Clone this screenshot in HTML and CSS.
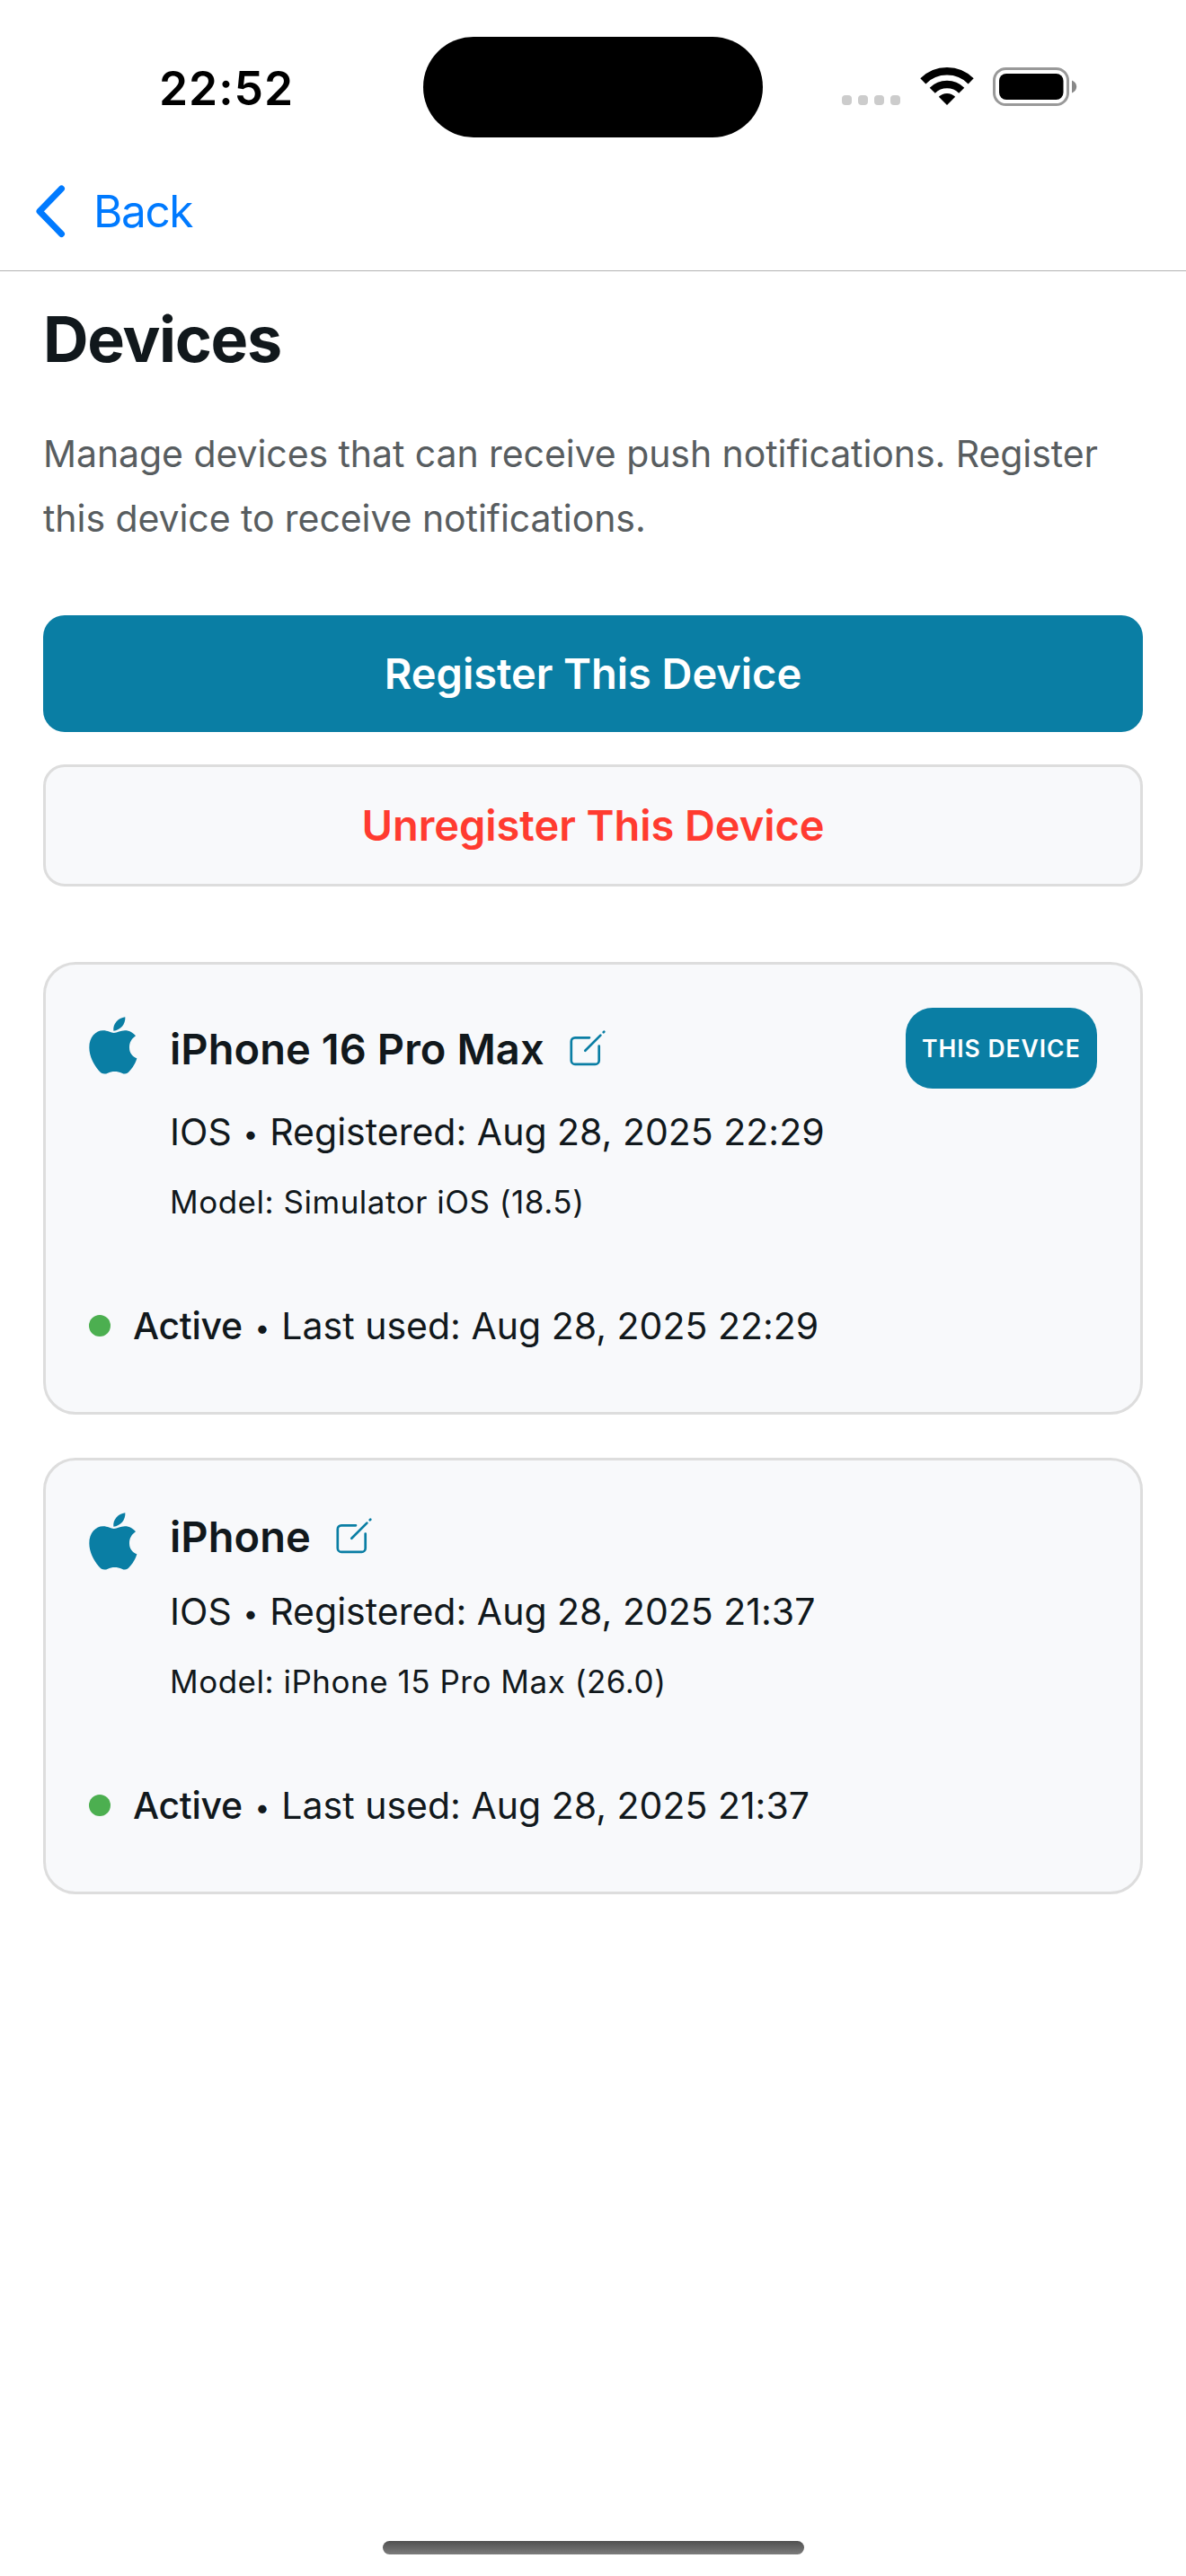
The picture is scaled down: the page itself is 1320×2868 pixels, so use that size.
FILE: index.html
```html
<!DOCTYPE html>
<html lang="en">
<head>
<meta charset="utf-8">
<title>Devices</title>
<link rel="stylesheet" href="styles.css">
</head>
<body>
<svg class="sprite" aria-hidden="true">
  <symbol id="apple" viewBox="27 36 162 198">
    <path d="M110 90C122 90 132 82 147 82C163 82 175 90 183 100C170 109 162 121 162 139C162 157 172 169 187 175C183 191 172 208 163 217C155 227 147 229 137 224C122 217 103 217 90 224C78 230 68 226 60 216C42 195 28 168 28 139C28 104 50 82 74 82C90 82 100 90 110 90Z"/>
    <path d="M109 83C106 60 124 40 148 37C150 60 132 82 109 83Z"/>
  </symbol>
  <symbol id="edit" viewBox="0 0 44 44">
    <path d="M24 9.3H8A4.2 4.2 0 0 0 3.8 13.5V34.7A4.2 4.2 0 0 0 8 38.9H30.5A4.2 4.2 0 0 0 34.7 34.7V18.5M19.3 23.7L36.4 6.6M39.7 3.3L40.3 2.7"/>
  </symbol>
</svg>
<div class="screen">
  <div class="status-bar">
    <div class="time">22:52</div>
    <div class="island"></div>
    <div class="indicators">
      <div class="cellular"><i></i><i></i><i></i><i></i></div>
      <svg class="wifi" viewBox="0 0 60 44">
        <path class="arc" d="M3.34 16.34A37.7 37.7 0 0 1 56.66 16.34M13.74 26.74A23 23 0 0 1 46.26 26.74"/>
        <path d="M30 43L20.8 33.8A13 13 0 0 1 39.2 33.8Z"/>
      </svg>
      <svg class="battery" viewBox="0 0 94 44">
        <rect class="shell" x="1.5" y="2.5" width="82" height="40" rx="13"/>
        <rect x="7" y="8" width="71.5" height="29" rx="8"/>
        <path class="nub" d="M88 15.5C91.2 16.6 93.2 19.5 93.2 22.5S91.2 28.4 88 29.5Z"/>
      </svg>
    </div>
  </div>

  <nav class="nav">
    <svg class="chevron" viewBox="0 0 36 60"><path d="M30.5 5L6 30.2L30.5 55.5"/></svg>
    <a class="back">Back</a>
  </nav>

  <main class="content">
    <h1 class="title">Devices</h1>
    <p class="description">Manage devices that can receive push notifications. Register<br>this device to receive notifications.</p>
    <button class="button primary">Register This Device</button>
    <button class="button danger">Unregister This Device</button>

    <div class="devices">
      <section class="card">
        <div class="device">
          <svg class="platform"><use href="#apple"/></svg>
          <div class="info">
            <div class="heading current">
              <h2 class="name">iPhone 16 Pro Max</h2>
              <svg class="edit"><use href="#edit"/></svg>
              <span class="badge">THIS DEVICE</span>
            </div>
            <p class="meta">IOS <span class="sep">•</span> Registered: Aug 28, 2025 22:29</p>
            <p class="model">Model: Simulator iOS (18.5)</p>
          </div>
        </div>
        <div class="status"><i class="dot"></i><strong class="state">Active</strong><span class="used"><span class="sep">•</span> Last used: Aug 28, 2025 22:29</span></div>
      </section>

      <section class="card">
        <div class="device">
          <svg class="platform"><use href="#apple"/></svg>
          <div class="info">
            <div class="heading">
              <h2 class="name">iPhone</h2>
              <svg class="edit"><use href="#edit"/></svg>
            </div>
            <p class="meta">IOS <span class="sep">•</span> Registered: Aug 28, 2025 21:37</p>
            <p class="model">Model: iPhone 15 Pro Max (26.0)</p>
          </div>
        </div>
        <div class="status"><i class="dot"></i><strong class="state">Active</strong><span class="used"><span class="sep">•</span> Last used: Aug 28, 2025 21:37</span></div>
      </section>
    </div>
  </main>

  <div class="home-indicator"></div>
</div>
</body>
</html>
```
FILE: styles.css
```css
* { box-sizing: border-box; margin: 0; padding: 0; }

body {
  background: #fff;
  color: #11181c;
  font-family: Inter, "Liberation Sans", sans-serif;
}

.sprite { display: none; }

.screen {
  display: flex;
  flex-direction: column;
  width: 1320px;
  height: 2868px;
  padding-bottom: 24px;
}

/* Status bar */
.status-bar {
  display: grid;
  grid-template-columns: 471px 378px 1fr;
  align-items: start;
  height: 170px;
}
.time {
  margin-top: 68px;
  padding-left: 177px;
  color: #000;
  font-size: 51.5px;
  font-weight: 600;
  line-height: 60px;
  letter-spacing: 1px;
}
.island {
  height: 112px;
  margin-top: 41px;
  border-radius: 56px;
  background: #000;
}
.indicators {
  display: flex;
  height: 44px;
  margin-top: 74px;
  padding-left: 88px;
}
.cellular {
  display: flex;
  gap: 7px;
  margin-top: 32px;
}
.cellular i {
  width: 11px;
  height: 11px;
  border-radius: 4px;
  background: #ccc;
}
.wifi { width: 60px; height: 44px; margin-left: 21.5px; }
.wifi .arc { fill: none; stroke: #000; stroke-width: 8.6; }
.battery { width: 94px; height: 44px; margin-left: 21.5px; }
.battery .shell { fill: none; stroke: #999; stroke-width: 3; }
.battery .nub { fill: #888; }

/* Navigation */
.nav {
  display: flex;
  align-items: center;
  height: 132px;
  padding: 0 0 2px 38px;
  border-bottom: 1px solid #b2b2b2;
}
.chevron { width: 36px; height: 60px; }
.chevron path {
  fill: none;
  stroke: #007aff;
  stroke-width: 7;
  stroke-linecap: round;
  stroke-linejoin: round;
}
.back {
  margin-left: 30px;
  color: #007aff;
  font-size: 49.5px;
  line-height: 60px;
  letter-spacing: -1.4px;
}

/* Content */
.content {
  display: flex;
  flex-direction: column;
  padding: 34px 48px 0;
}
.title {
  font-size: 70px;
  font-weight: 700;
  line-height: 84px;
  letter-spacing: -1.3px;
}
.description {
  margin-top: 49px;
  color: #585d60;
  font-size: 41px;
  line-height: 72px;
  letter-spacing: -0.07px;
}
.button {
  height: 130px;
  margin-top: 72px;
  padding-bottom: 2px;
  border: 0;
  border-radius: 24px;
  font-family: inherit;
  font-size: 47px;
  font-weight: 600;
  letter-spacing: -0.06px;
}
.primary { background: #0a7ea4; color: #fff; }
.danger {
  height: 136px;
  margin-top: 36px;
  border: 3px solid #ddd;
  background: #f8f9fb;
  color: #ff3b30;
}

/* Device cards */
.devices {
  display: flex;
  flex-direction: column;
  gap: 48px;
  margin-top: 84px;
}
.card {
  padding: 48px 48px 66px;
  border: 3px solid #ddd;
  border-radius: 36px;
  background: #f8f9fb;
}
.device { display: flex; gap: 36px; }
.platform {
  width: 54px;
  height: 66px;
  margin-top: 10px;
  fill: #0a7ea4;
}
.info { flex: 1; }
.heading { display: flex; align-items: center; height: 72px; }
.current { height: 90px; }
.name {
  padding-top: 2px;
  font-size: 47px;
  font-weight: 600;
  line-height: 60px;
  letter-spacing: 0.06px;
}
.edit {
  width: 44px;
  height: 44px;
  margin: 2px 0 0 26.5px;
  fill: none;
  stroke: #0a7ea4;
  stroke-width: 2.7;
  stroke-linecap: round;
}
.badge {
  width: 213px;
  height: 90px;
  margin-left: auto;
  padding-left: 18px;
  border-radius: 30px;
  background: #0a7ea4;
  color: #fff;
  font-size: 26.5px;
  font-weight: 600;
  line-height: 91px;
  letter-spacing: 0.98px;
}
.meta {
  margin-top: 18px;
  font-size: 41px;
  line-height: 60px;
  letter-spacing: 0.01px;
}
.sep {
  display: inline-flex;
  justify-content: center;
  width: 19.5px;
  font-size: 30px;
  line-height: 1;
  vertical-align: 2px;
}
.model {
  margin-top: 24px;
  font-size: 35px;
  line-height: 48px;
  letter-spacing: 0.52px;
}
.status {
  display: flex;
  align-items: center;
  height: 60px;
  margin-top: 84px;
  font-size: 41px;
  line-height: 60px;
}
.dot {
  width: 24px;
  height: 24px;
  border-radius: 50%;
  background: #4caf50;
}
.state {
  margin-left: 25px;
  font-weight: 500;
  letter-spacing: -0.3px;
}
.used { margin-left: 12.5px; letter-spacing: 0.01px; }

.home-indicator {
  width: 469px;
  height: 15px;
  margin: auto auto 0;
  border-radius: 8px;
  background: linear-gradient(#505050, #7c7c7c);
}
```
